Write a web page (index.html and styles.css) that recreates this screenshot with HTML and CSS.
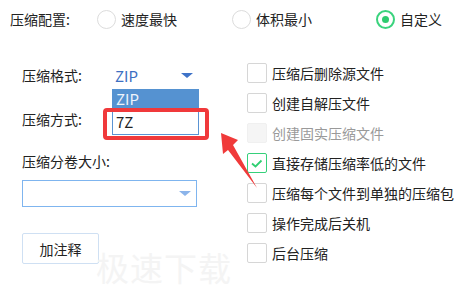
FILE: index.html
```html
<!DOCTYPE html>
<html lang="zh-CN">
<head>
    <meta charset="UTF-8">
    <title>压缩配置</title>
    <link rel="stylesheet" href="styles.css">
</head>
<body>
    <div class="page">
        <div class="top">
            <span class="top-label">压缩配置:</span>
            <label class="radio opt-1"><span class="circle"></span>速度最快</label>
            <label class="radio opt-2"><span class="circle"></span>体积最小</label>
            <label class="radio checked"><span class="circle"></span>自定义</label>
        </div>

        <div class="main">
            <div class="left">
                <div class="field">
                    <span class="field-label">压缩格式:</span>
                    <div class="format">
                        <span>ZIP</span>
                        <span class="arrow"></span>
                    </div>
                </div>
                <div class="field field-2">
                    <span class="field-label">压缩方式:</span>
                </div>
                <div class="field field-3">
                    <span class="field-label">压缩分卷大小:</span>
                </div>
                <div class="select">
                    <span class="arrow light"></span>
                </div>
                <button class="btn">加注释</button>
            </div>

            <div class="right">
                <label class="check"><span class="box"></span>压缩后删除源文件</label>
                <label class="check"><span class="box"></span>创建自解压文件</label>
                <label class="check disabled"><span class="box"></span>创建固实压缩文件</label>
                <label class="check checked"><span class="box">
                    <svg width="18" height="18" viewBox="0 0 18 18"><polyline points="4,9.5 7.5,12.5 13.5,6.5" fill="none" stroke="#2fcf72" stroke-width="1.8"/></svg>
                </span>直接存储压缩率低的文件</label>
                <label class="check"><span class="box"></span>压缩每个文件到单独的压缩包</label>
                <label class="check"><span class="box"></span>操作完成后关机</label>
                <label class="check"><span class="box"></span>后台压缩</label>
            </div>
        </div>

        <div class="watermark">极速下载</div>

        <div class="dropdown">
            <div class="item active">ZIP</div>
            <div class="item">7Z</div>
        </div>
        <div class="highlight"></div>
        <svg class="pointer" width="50" height="65" viewBox="0 0 50 65">
            <polygon points="6,3 23,10 18,15 42,58 13,20 8,24" fill="#f03a3a"/>
        </svg>
    </div>
</body>
</html>
```

FILE: styles.css
```css
body {
    margin: 0;
    background: #fff;
    font-family: "Noto Sans CJK SC", "Microsoft YaHei", sans-serif;
    font-size: 14px;
    color: #222;
}
.page {
    position: relative;
    width: 467px;
    height: 296px;
    overflow: hidden;
}
.top {
    display: flex;
    align-items: center;
    height: 38px;
    padding-left: 10px;
}
.top-label {
    width: 87px;
}
.radio {
    display: flex;
    align-items: center;
    gap: 5px;
}
.opt-1 {
    width: 135px;
}
.opt-2 {
    width: 144px;
}
.circle {
    width: 17px;
    height: 17px;
    border: 1px solid #dcdcdc;
    border-radius: 50%;
    box-sizing: content-box;
}
.radio.checked .circle {
    width: 15px;
    height: 15px;
    border: 2px solid #3ad37d;
    display: flex;
    align-items: center;
    justify-content: center;
}
.radio.checked .circle::after {
    content: "";
    width: 7px;
    height: 7px;
    border-radius: 50%;
    background: #2ecb6f;
}
.main {
    display: flex;
    padding-top: 25px;
}
.left {
    width: 225px;
    padding-left: 22px;
}
.field {
    display: flex;
    align-items: center;
    height: 24px;
}
.field-2 {
    margin-top: 20px;
}
.field-3 {
    margin-top: 18px;
}
.field-label {
    width: 93px;
}
.format {
    display: flex;
    align-items: center;
    justify-content: space-between;
    width: 78px;
    color: #3d6fc2;
    font-size: 15px;
}
.arrow {
    width: 0;
    height: 0;
    border-left: 6px solid transparent;
    border-right: 6px solid transparent;
    border-top: 5px solid #3f73c8;
}
.arrow.light {
    border-top-color: #8bb4ea;
}
.select {
    display: flex;
    align-items: center;
    justify-content: flex-end;
    margin-top: 7px;
    width: 175px;
    height: 27px;
    border: 1px solid #7fb5ef;
    box-sizing: border-box;
    padding-right: 5px;
}
.btn {
    display: block;
    margin-top: 26px;
    width: 77px;
    height: 31px;
    background: #fff;
    border: 1px solid #cfe0f3;
    border-radius: 2px;
    font-family: inherit;
    font-size: 14px;
    color: #222;
    padding: 0;
}
.right {
    display: flex;
    flex-direction: column;
    gap: 10px;
}
.check {
    display: flex;
    align-items: center;
    gap: 5px;
    height: 20px;
}
.box {
    width: 18px;
    height: 18px;
    border: 1px solid #d6d6d6;
    border-radius: 2px;
    display: flex;
    align-items: center;
    justify-content: center;
}
.check.disabled {
    color: #9a9a9a;
}
.check.disabled .box {
    background: #f5f5f5;
    border-color: #f0f0f0;
}
.check.checked .box {
    border-color: #35d07a;
}
.watermark {
    position: absolute;
    left: 96px;
    top: 243px;
    font-size: 33px;
    color: #f4f4f4;
    letter-spacing: 1px;
}
.dropdown {
    position: absolute;
    left: 112px;
    top: 89px;
    width: 87px;
    border: 1px solid #5a93d3;
    border-top: none;
    box-sizing: border-box;
    background: #fff;
    font-size: 15px;
}
.item {
    height: 26px;
    line-height: 28px;
    padding-left: 3px;
}
.item.active {
    height: 19px;
    line-height: 20px;
    background: #5592d1;
    color: #eef4fb;
    margin: 0 -1px;
    padding-left: 4px;
}
.highlight {
    position: absolute;
    left: 103px;
    top: 108px;
    width: 106px;
    height: 32px;
    border: 4px solid #f0393b;
    border-radius: 4px;
    box-sizing: border-box;
}
.pointer {
    position: absolute;
    left: 215px;
    top: 130px;
}
```
